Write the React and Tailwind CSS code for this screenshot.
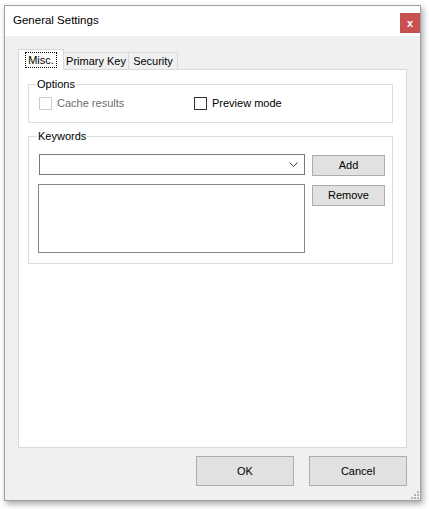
import React from 'react';

function Checkbox({ label, disabled, className = '' }) {
    return (
        <label className={`flex items-center gap-[5px] h-[17px] ${className}`}>
            <span
                className={`w-[13px] h-[13px] bg-white border ${
                    disabled ? 'border-[#cccccc]' : 'border-[#333333]'
                }`}
            />
            <span className={disabled ? 'text-[#6d6d6d]' : 'text-black'}>{label}</span>
        </label>
    );
}

function Button({ children, className = '' }) {
    return (
        <button className={`flex items-center justify-center bg-[#e1e1e1] border border-[#adadad] text-black ${className}`}>
            {children}
        </button>
    );
}

export default function App() {
    return (
        <div className="min-h-screen bg-white font-['Liberation_Sans',Arial,sans-serif] text-[11px] text-black">
            <div className="pt-[5px] pl-[4px]">
                <div className="relative w-[417px] h-[496px] flex flex-col bg-[#f0f0f0] border border-[#a0a0a0] shadow-[2px_3px_6px_rgba(0,0,0,0.35)]">
                    {/* Title bar */}
                    <div className="h-[30px] bg-white flex justify-between">
                        <div className="pl-[8px] pt-[7px] text-[11.5px] leading-[14px]">General Settings</div>
                        <button className="mt-[7px] w-[20px] h-[20px] bg-[#c75050] text-white font-bold text-[11px] leading-none flex items-center justify-center">
                            x
                        </button>
                    </div>

                    {/* Body */}
                    <div className="flex flex-col px-[13px] pt-[13px]">
                        {/* Tabs */}
                        <div className="flex items-end h-[20px]">
                            <div className="relative z-10 -mb-px h-[21px] w-[46px] bg-white border border-b-0 border-[#d9d9d9] flex items-start justify-center pt-[2px]">
                                <span className="border border-dotted border-black px-[2px] h-[16px] leading-[14px]">Misc.</span>
                            </div>
                            <div className="h-[17px] w-[65px] bg-[#f0f0f0] border border-b-0 border-l-0 border-[#d9d9d9] flex items-center justify-center">
                                Primary Key
                            </div>
                            <div className="h-[17px] w-[49px] bg-[#f0f0f0] border border-b-0 border-l-0 border-[#d9d9d9] flex items-center justify-center">
                                Security
                            </div>
                        </div>

                        {/* Tab panel */}
                        <div className="h-[379px] bg-white border border-[#d9d9d9] pl-[9px] pr-[13px] pt-[7px] flex flex-col">
                            <fieldset className="border border-[#dcdcdc] px-[10px] pt-[4px] pb-[10px]">
                                <legend className="-ml-[3px] px-[1px] leading-[14px]">Options</legend>
                                <div className="flex">
                                    <Checkbox label="Cache results" disabled className="w-[155px]" />
                                    <Checkbox label="Preview mode" />
                                </div>
                            </fieldset>

                            <fieldset className="mt-[6px] border border-[#dcdcdc] pl-[10px] pt-[11px] pb-[10px]">
                                <legend className="-ml-[2px] px-[1px] leading-[14px]">Keywords</legend>
                                <div className="flex flex-col gap-[8px]">
                                    <div className="flex gap-[7px]">
                                        <div className="w-[266px] h-[21px] bg-white border border-[#7a7a7a] flex items-center justify-end pr-[6px]">
                                            <svg width="9" height="5" viewBox="0 0 9 5" fill="none">
                                                <path d="M0.5 0.5 L4.5 4.5 L8.5 0.5" stroke="#404040" strokeWidth="1" />
                                            </svg>
                                        </div>
                                        <Button className="mt-[1px] w-[73px] h-[21px]">Add</Button>
                                    </div>
                                    <div className="flex gap-[7px] -ml-px">
                                        <div className="w-[267px] h-[69px] bg-white border border-[#828790]" />
                                        <Button className="mt-[1px] w-[73px] h-[21px]">Remove</Button>
                                    </div>
                                </div>
                            </fieldset>
                        </div>

                        {/* Dialog buttons */}
                        <div className="flex justify-end gap-[15px] mt-[8px]">
                            <Button className="w-[98px] h-[30px]">OK</Button>
                            <Button className="w-[98px] h-[30px]">Cancel</Button>
                        </div>
                    </div>

                    {/* Size grip */}
                    <svg className="absolute right-[1px] bottom-[1px]" width="9" height="9" viewBox="0 0 9 9">
                        <rect x="7" y="1" width="2" height="2" fill="#b4b4b4" />
                        <rect x="4" y="4" width="2" height="2" fill="#b4b4b4" />
                        <rect x="7" y="4" width="2" height="2" fill="#b4b4b4" />
                        <rect x="1" y="7" width="2" height="2" fill="#b4b4b4" />
                        <rect x="4" y="7" width="2" height="2" fill="#b4b4b4" />
                        <rect x="7" y="7" width="2" height="2" fill="#b4b4b4" />
                    </svg>
                </div>
            </div>
        </div>
    );
}
